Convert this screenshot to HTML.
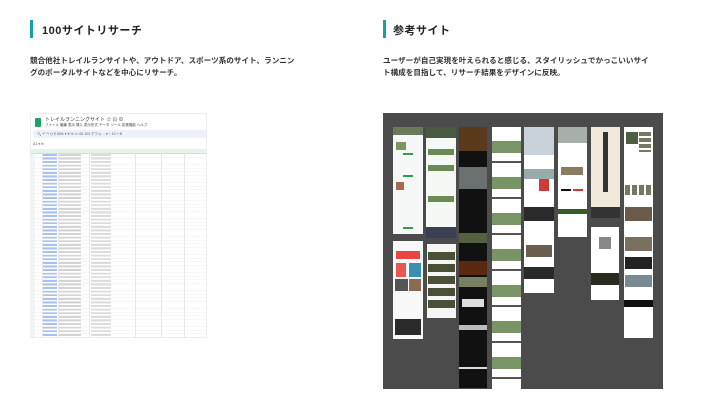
<!DOCTYPE html>
<html><head><meta charset="utf-8"><style>
*{margin:0;padding:0;box-sizing:border-box}
body{width:720px;height:405px;background:#fff;position:relative;overflow:hidden;font-family:"Liberation Sans","Noto Sans CJK JP",sans-serif;color:#333}
.bar{position:absolute;width:3px;height:18px;background:#17a3a6}
.h{position:absolute;font-size:11px;font-weight:bold;color:#222;letter-spacing:.5px}
.p{position:absolute;font-size:7.6px;line-height:12px;color:#333;font-weight:bold}
.a{position:absolute}
</style></head><body>
<div class="bar" style="left:30px;top:20px"></div>
<div class="h" style="left:42px;top:22px">100サイトリサーチ</div>
<div class="p" style="left:30px;top:55px;width:266px">競合他社トレイルランサイトや、アウトドア、スポーツ系のサイト、ランニングのポータルサイトなどを中心にリサーチ。</div>
<div class="bar" style="left:383px;top:20px"></div>
<div class="h" style="left:393px;top:22px">参考サイト</div>
<div class="p" style="left:383px;top:55px;width:266px">ユーザーが自己実現を叶えられると感じる、スタイリッシュでかっこいいサイト構成を目指して、リサーチ結果をデザインに反映。</div>

<!-- spreadsheet -->
<div class="a" style="left:30px;top:113px;width:177px;height:225px;background:#fff;border:1px solid #eee;overflow:hidden">
 <div class="a" style="left:4px;top:4px;width:6px;height:9px;background:#1ea362;border-radius:1px"></div>
 <div class="a" style="left:14px;top:2px;font-size:5px;color:#333">トレイルランニングサイト ☆ ⊡ ⊘</div>
 <div class="a" style="left:14px;top:9px;font-size:3.5px;color:#444">ファイル 編集 表示 挿入 表示形式 データ ツール 拡張機能 ヘルプ</div>
 <div class="a" style="left:2px;top:16px;width:175px;height:8px;background:#edf2fa;border-radius:4px;font-size:3.5px;color:#555;padding:2px 4px">🔍 ↶ ↷ ⎙ ¶ 50% ▾ ¥ % .0 .00 123 デフォ… ▾ − 10 + B</div>
 <div class="a" style="left:2px;top:28px;font-size:3.5px;color:#555">A1 ▾ fx</div>
 <div class="a" style="left:0;top:35px;width:177px;height:5px;background:#e6f2ea;border-bottom:1px solid #cfe3d5"></div>
 <div class="a" style="left:0;top:40px;width:177px;height:185px;
  background:
  linear-gradient(90deg,transparent 12px,#a9c0f0 12px 26px,transparent 26px 28px,#d4d4d4 28px 50px,transparent 50px 60px,#dcdcdc 60px 80px,transparent 80px);
  -webkit-mask:repeating-linear-gradient(#000 0 1.8px,transparent 1.8px 3.6px);"></div>
 <div class="a" style="left:0;top:40px;width:177px;height:185px;background:linear-gradient(90deg,#f2f5f3 0 4px,transparent 4px),linear-gradient(90deg,transparent 11px,#e6e6e6 11px 12px,transparent 12px 27px,#e6e6e6 27px 28px,transparent 28px 58px,#e6e6e6 58px 59px,transparent 59px 104px,#e6e6e6 104px 105px,transparent 105px 130px,#e6e6e6 130px 131px,transparent 131px 153px,#e6e6e6 153px 154px,transparent 154px)"></div>
 <div class="a" style="left:0;top:40px;width:177px;height:185px;background:repeating-linear-gradient(transparent 0 3.2px,#eee 3.2px 3.6px)"></div>
</div>

<!-- reference panel -->
<div class="a" style="left:383px;top:113px;width:280px;height:276px;background:#4b4b4b">
 <div class="a" style="left:10px;top:14px;width:30px;height:107px;background:#f5f8f6"><div class="a" style="left:0;top:0;width:30px;height:8px;background:#6b7a5a"></div><div class="a" style="left:3px;top:15px;width:10px;height:8px;background:#7c9860"></div><div class="a" style="left:10px;top:26px;width:10px;height:2px;background:#2e9e4a"></div><div class="a" style="left:10px;top:48px;width:10px;height:2px;background:#2e9e4a"></div><div class="a" style="left:3px;top:55px;width:8px;height:8px;background:#a86a4a"></div><div class="a" style="left:10px;top:100px;width:10px;height:2px;background:#2e9e4a"></div></div>
 <div class="a" style="left:10px;top:128px;width:30px;height:98px;background:#f8f8f8"><div class="a" style="left:3px;top:10px;width:24px;height:8px;background:#e94545"></div><div class="a" style="left:3px;top:22px;width:10px;height:14px;background:#e95555"></div><div class="a" style="left:16px;top:22px;width:12px;height:14px;background:#3a90b0"></div><div class="a" style="left:2px;top:38px;width:13px;height:12px;background:#555"></div><div class="a" style="left:16px;top:38px;width:12px;height:12px;background:#8a6a50"></div><div class="a" style="left:2px;top:78px;width:26px;height:16px;background:#2a2a2a"></div></div>
 <div class="a" style="left:43px;top:14px;width:30px;height:111px;background:#f5f8f5"><div class="a" style="left:0;top:0;width:30px;height:11px;background:#4a5a40"></div><div class="a" style="left:2px;top:22px;width:26px;height:6px;background:#6b8a55"></div><div class="a" style="left:2px;top:38px;width:26px;height:6px;background:#6b8a55"></div><div class="a" style="left:2px;top:69px;width:26px;height:6px;background:#6b8a55"></div><div class="a" style="left:0;top:100px;width:30px;height:11px;background:#3a4050"></div></div>
 <div class="a" style="left:44px;top:131px;width:29px;height:74px;background:#f5f5f5"><div class="a" style="left:1px;top:8px;width:27px;height:60px;background:repeating-linear-gradient(#4a5035 0 8px,#f5f5f5 8px 12px)"></div></div>
 <div class="a" style="left:76px;top:14px;width:28px;height:261px;background:#111"><div class="a" style="left:0;top:0;width:28px;height:24px;background:#5a3a1a"></div><div class="a" style="left:0;top:40px;width:28px;height:22px;background:#6a7070"></div><div class="a" style="left:0;top:106px;width:28px;height:10px;background:#556040"></div><div class="a" style="left:0;top:134px;width:28px;height:14px;background:#5a2a10"></div><div class="a" style="left:0;top:150px;width:28px;height:10px;background:#778060"></div><div class="a" style="left:3px;top:172px;width:22px;height:8px;background:#ddd"></div><div class="a" style="left:0;top:198px;width:28px;height:5px;background:#bbb"></div><div class="a" style="left:0;top:240px;width:28px;height:2px;background:#ddd"></div></div>
 <div class="a" style="left:109px;top:14px;width:29px;height:262px;background:#fff;background-image:repeating-linear-gradient(transparent 0 14px,#7a9468 14px 26px,transparent 26px 34px,#555 34px 36px,transparent 36px 26.2px)"></div>
 <div class="a" style="left:141px;top:14px;width:30px;height:166px;background:#fff"><div class="a" style="left:0;top:0;width:30px;height:28px;background:#c8d2d8"></div><div class="a" style="left:0;top:42px;width:30px;height:10px;background:#9aa"></div><div class="a" style="left:15px;top:52px;width:10px;height:12px;background:#d03a3a"></div><div class="a" style="left:0;top:80px;width:30px;height:14px;background:#2a2a2a"></div><div class="a" style="left:2px;top:118px;width:26px;height:12px;background:#6a6050"></div><div class="a" style="left:0;top:140px;width:30px;height:12px;background:#2a2a2a"></div></div>
 <div class="a" style="left:175px;top:14px;width:29px;height:110px;background:#fff"><div class="a" style="left:0;top:0;width:29px;height:16px;background:#a8aea8"></div><div class="a" style="left:3px;top:40px;width:22px;height:8px;background:#8a7a60"></div><div class="a" style="left:3px;top:62px;width:10px;height:2px;background:#111"></div><div class="a" style="left:15px;top:62px;width:10px;height:2px;background:#d33"></div><div class="a" style="left:0;top:82px;width:29px;height:5px;background:#3a5a2a"></div></div>
 <div class="a" style="left:208px;top:14px;width:29px;height:91px;background:#f1e9dc"><div class="a" style="left:12px;top:5px;width:5px;height:60px;background:#333"></div><div class="a" style="left:0;top:80px;width:29px;height:11px;background:#333"></div></div>
 <div class="a" style="left:208px;top:114px;width:28px;height:73px;background:#fff"><div class="a" style="left:8px;top:10px;width:12px;height:12px;background:#888"></div><div class="a" style="left:0;top:46px;width:28px;height:12px;background:#2a2a20"></div></div>
 <div class="a" style="left:241px;top:14px;width:29px;height:211px;background:#fff"><div class="a" style="left:2px;top:5px;width:12px;height:12px;background:#4a6040"></div><div class="a" style="left:15px;top:5px;width:12px;height:20px;background:repeating-linear-gradient(#776 0 4px,#fff 4px 6px)"></div><div class="a" style="left:1px;top:58px;width:27px;height:10px;background:repeating-linear-gradient(90deg,#776 0 5px,#fff 5px 7px)"></div><div class="a" style="left:1px;top:80px;width:27px;height:14px;background:#6a5a4a"></div><div class="a" style="left:1px;top:110px;width:27px;height:14px;background:#7a7060"></div><div class="a" style="left:1px;top:130px;width:27px;height:12px;background:#222"></div><div class="a" style="left:1px;top:148px;width:27px;height:12px;background:#7a8a90"></div><div class="a" style="left:0;top:173px;width:29px;height:7px;background:#111"></div></div>
</div>
</body></html>
